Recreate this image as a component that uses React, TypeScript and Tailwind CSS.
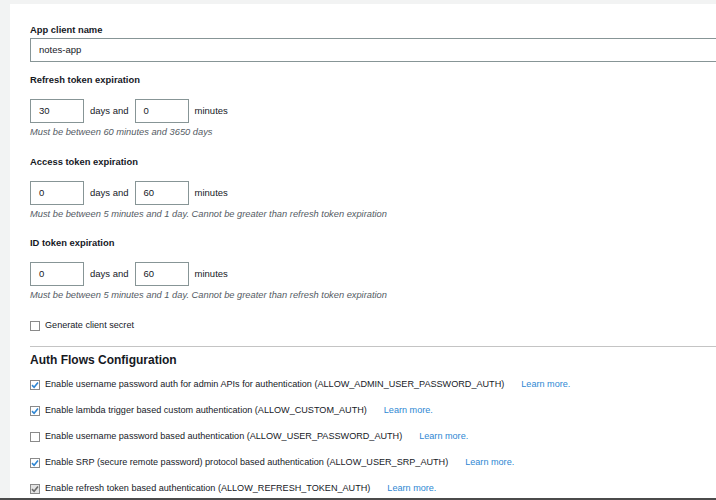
import React from "react";

const font = { fontFamily: '"Liberation Sans", Arial, Helvetica, sans-serif' };

function Label({ children, mt }: { children: React.ReactNode; mt: string }) {
  return <div className={`${mt} text-[9.4px] font-bold text-[#16191f] leading-[12px]`}>{children}</div>;
}

function Box({ value }: { value: string }) {
  return (
    <div className="w-[54px] h-[24px] border border-[#879596] bg-white flex items-center pl-[8px] text-[9.5px] text-[#16191f] shrink-0">
      {value}
    </div>
  );
}

function Expiry({ label, days, mins, help, mt }: { label: string; days: string; mins: string; help: string; mt: string }) {
  return (
    <div>
      <Label mt={mt}>{label}</Label>
      <div className="mt-[13px] flex items-center">
        <Box value={days} />
        <span className="ml-[6px] mr-[6px] text-[9.5px] text-[#16191f]">days and</span>
        <Box value={mins} />
        <span className="ml-[6px] text-[9.5px] text-[#16191f]">minutes</span>
      </div>
      <div className="mt-[3px] text-[9.3px] italic text-[#545b64] leading-[12px]">{help}</div>
    </div>
  );
}

function Check({ state }: { state: "on" | "off" | "disabled" }) {
  const bg = state === "disabled" ? "bg-[#e4e4e4]" : "bg-white";
  const color = state === "disabled" ? "#6b6b6b" : "#2f86d3";
  return (
    <div className={`w-[10px] h-[10px] border border-[#8a8a8a] ${bg} flex items-center justify-center shrink-0`}>
      {state !== "off" && (
        <svg width="8" height="8" viewBox="0 0 8 8">
          <path d="M1 4.1 L3.1 6.2 L7 1.4" fill="none" stroke={color} strokeWidth="1.6" />
        </svg>
      )}
    </div>
  );
}

function Flow({ state, text }: { state: "on" | "off" | "disabled"; text: string }) {
  return (
    <div className="flex items-center h-[26px]">
      <Check state={state} />
      <span className="ml-[5px] text-[9.1px] text-[#16191f] whitespace-nowrap">{text}</span>
      <span className="ml-[17px] text-[9.1px] text-[#2e87d3] whitespace-nowrap">Learn more.</span>
    </div>
  );
}

export default function App() {
  return (
    <div className="w-[716px] h-[500px] bg-[#f2f3f3] relative overflow-hidden" style={font}>
      <div className="pl-[10px] pt-[4px] h-full">
        <div className="bg-white h-full pl-[20px] pt-[20px] overflow-hidden">
          <Label mt="mt-0">App client name</Label>
          <div className="mt-[2px] h-[24px] border border-[#879596] flex items-center pl-[8px] text-[9.5px] text-[#16191f] mr-[-2px]">
            notes-app
          </div>
          <Expiry mt="mt-[12px]" label="Refresh token expiration" days="30" mins="0" help="Must be between 60 minutes and 3650 days" />
          <Expiry mt="mt-[18px]" label="Access token expiration" days="0" mins="60" help="Must be between 5 minutes and 1 day. Cannot be greater than refresh token expiration" />
          <Expiry mt="mt-[17px]" label="ID token expiration" days="0" mins="60" help="Must be between 5 minutes and 1 day. Cannot be greater than refresh token expiration" />
          <div className="mt-[19px] h-[12px] flex items-center">
            <Check state="off" />
            <span className="ml-[5px] text-[9.1px] text-[#16191f]">Generate client secret</span>
          </div>
          <div className="mt-[14px] border-t border-[#c4c4c4]" />
          <div className="mt-[5px] text-[12px] font-bold text-[#16191f] leading-[16px]">Auth Flows Configuration</div>
          <div className="mt-[4px]">
            <Flow state="on" text="Enable username password auth for admin APIs for authentication (ALLOW_ADMIN_USER_PASSWORD_AUTH)" />
            <Flow state="on" text="Enable lambda trigger based custom authentication (ALLOW_CUSTOM_AUTH)" />
            <Flow state="off" text="Enable username password based authentication (ALLOW_USER_PASSWORD_AUTH)" />
            <Flow state="on" text="Enable SRP (secure remote password) protocol based authentication (ALLOW_USER_SRP_AUTH)" />
            <Flow state="disabled" text="Enable refresh token based authentication (ALLOW_REFRESH_TOKEN_AUTH)" />
          </div>
        </div>
      </div>
      <div className="absolute left-0 right-0 bottom-0 h-[2px] bg-[#4b4b4b]" />
    </div>
  );
}
